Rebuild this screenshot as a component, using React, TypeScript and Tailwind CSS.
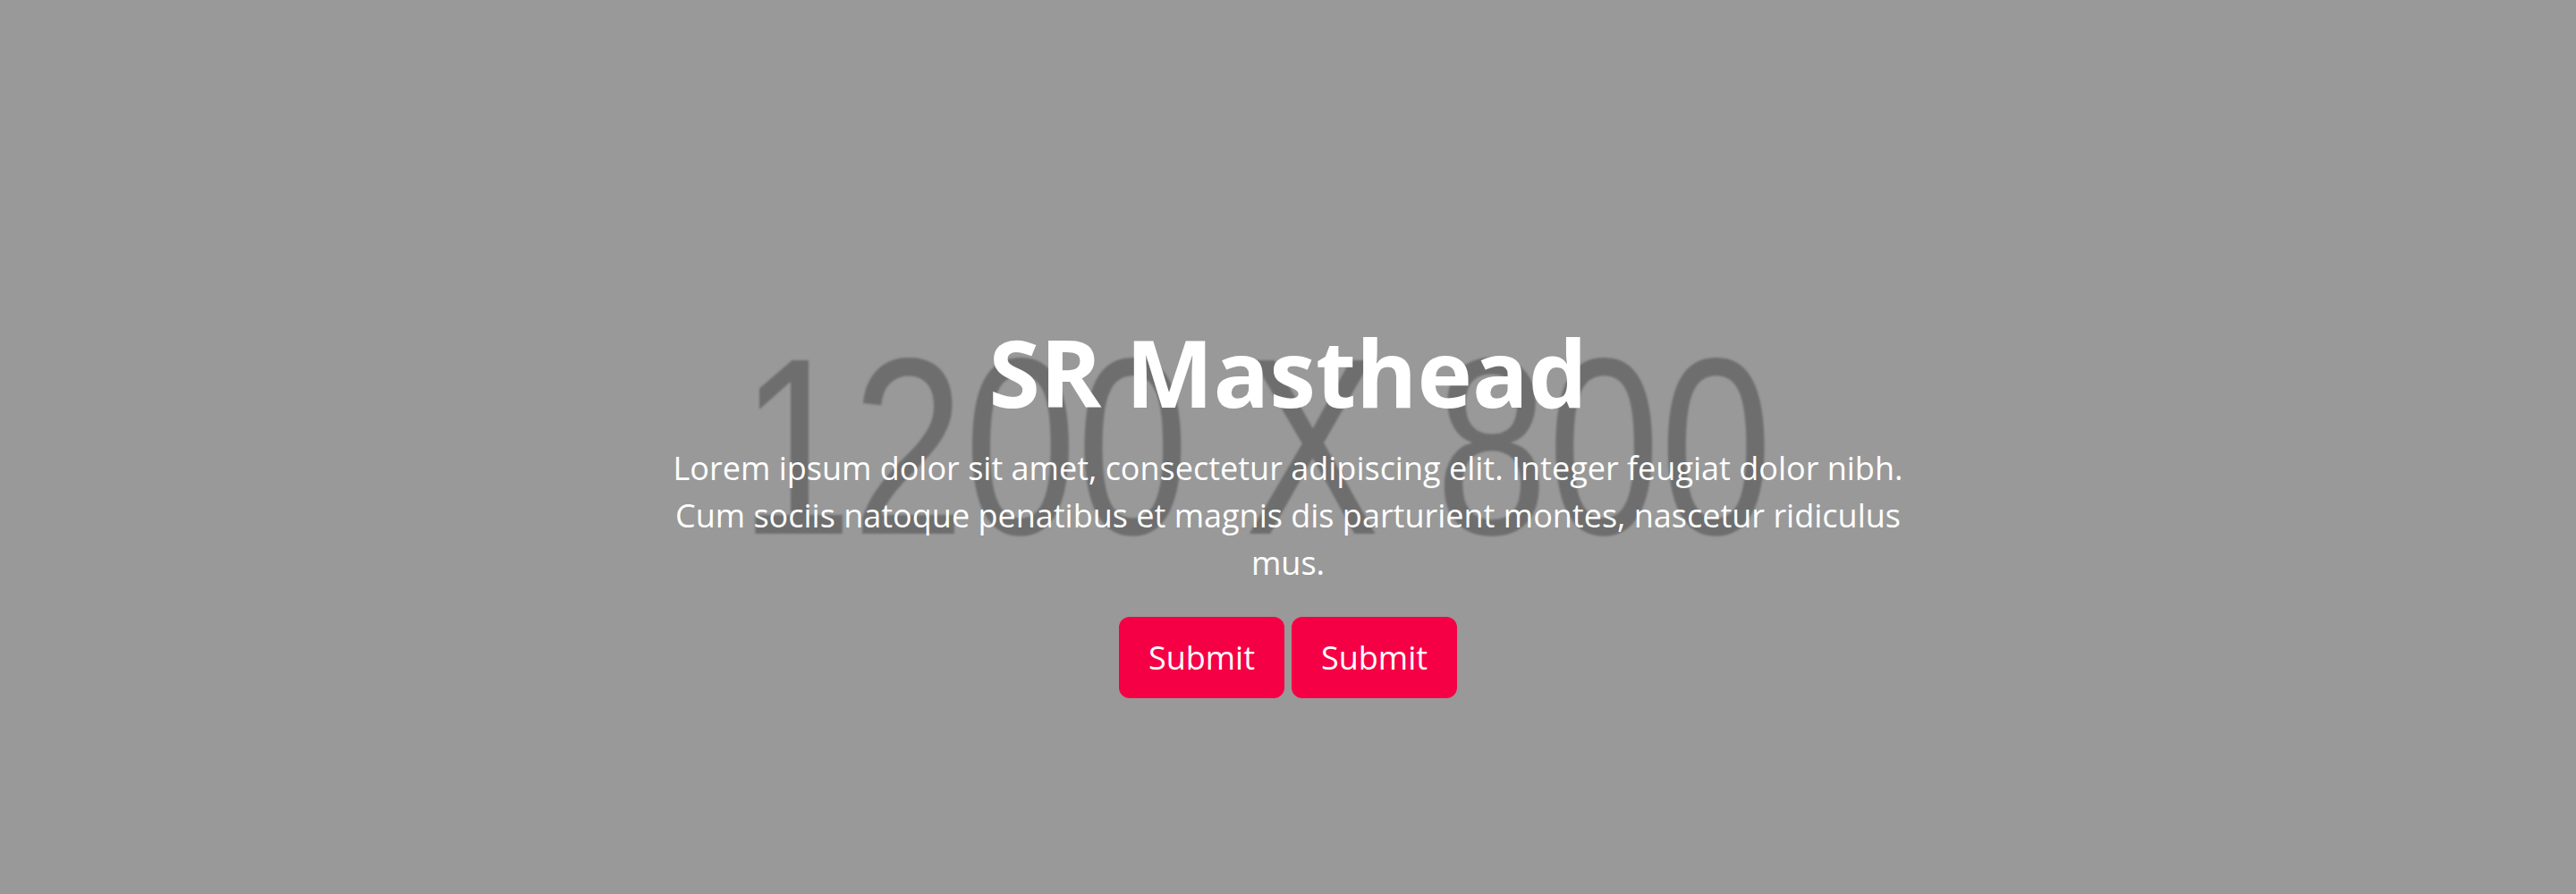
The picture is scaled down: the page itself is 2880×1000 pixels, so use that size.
import React from 'react';

const copy =
  'Lorem ipsum dolor sit amet, consectetur adipiscing elit. Integer feugiat dolor nibh. Cum sociis natoque penatibus et magnis dis parturient montes, nascetur ridiculus mus.';

const Masthead: React.FC = () => {
  return (
    <section className="relative w-full h-[1000px] overflow-hidden bg-[#999999] font-['Open_Sans',sans-serif]">
      {/* placeholder picture behind the text */}
      <div className="absolute inset-0 flex items-center justify-center">
        <span className="block -translate-x-[36px] scale-x-[0.8] whitespace-pre font-['Liberation_Sans',Arial,sans-serif] text-[282px] leading-none text-[#6e6e6e] blur-[1px]">
          1200 X 800
        </span>
      </div>

      <div className="relative flex flex-col items-center pt-[356px] text-white text-center">
        <h1 className="text-[104px] font-bold leading-[120px]">SR Masthead</h1>
        <p className="mt-[21px] max-w-[1400px] text-[36px] leading-[53px]">{copy}</p>
        <div className="mt-[34px] flex gap-2">
          <button className="h-[91px] px-[33px] rounded-xl bg-[#f50045] text-[36px] text-white">
            Submit
          </button>
          <button className="h-[91px] px-[33px] rounded-xl bg-[#f50045] text-[36px] text-white">
            Submit
          </button>
        </div>
      </div>
    </section>
  );
};

export default function App() {
  return <Masthead />;
}
